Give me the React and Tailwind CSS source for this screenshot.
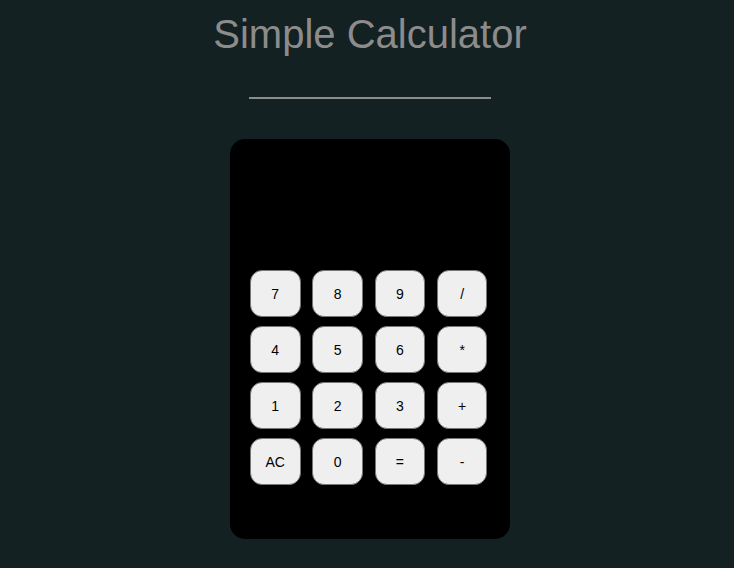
import React, { useState } from "react";

const keys = ["7", "8", "9", "/", "4", "5", "6", "*", "1", "2", "3", "+", "AC", "0", "=", "-"];

export default function App() {
  const [value, setValue] = useState("");

  const press = (k) => {
    if (k === "AC") return setValue("");
    if (k === "=") {
      try {
        // eslint-disable-next-line no-new-func
        setValue(String(Function(`return (${value})`)()));
      } catch {
        setValue("Error");
      }
      return;
    }
    setValue(value + k);
  };

  return (
    <div className="min-h-[568px] bg-[#132123] pl-[6px] font-['Liberation_Sans',Arial,sans-serif]">
      <h1 className="pt-[11px] text-center text-[40px] leading-[46px] text-[#8c8c8c]">Simple Calculator</h1>
      <hr className="mx-auto mt-[40px] w-[242px] border-0 border-t-2 border-[#8c8c8c]" />

      <div className="mx-auto mt-[40px] h-[400px] w-[280px] rounded-[15px] bg-black">
        <div className="h-[131px] px-[20px] pt-[60px] text-right text-[32px] text-white">{value}</div>
        <div className="grid grid-cols-[repeat(4,50.5px)] gap-x-[11.8px] gap-y-[9.5px] pl-[20px]">
          {keys.map((k) => (
            <button
              key={k}
              onClick={() => press(k)}
              className="h-[46.5px] w-[50.5px] rounded-[12px] border border-[#767676] bg-[#efefef] pt-[2px] text-[14px] text-black"
            >
              {k}
            </button>
          ))}
        </div>
      </div>
    </div>
  );
}
